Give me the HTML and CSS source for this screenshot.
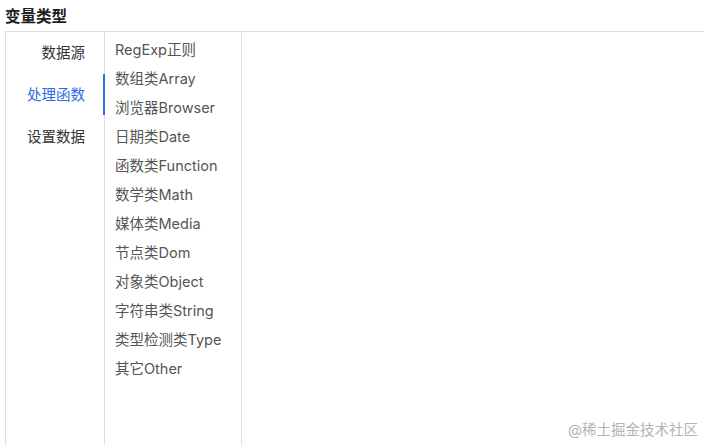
FILE: index.html
```html
<!DOCTYPE html>
<html lang="zh-CN">

<head>
    <meta charset="UTF-8">
    <title>变量类型</title>
    <link rel="stylesheet" href="styles.css">
</head>

<body>
    <h2 class="title">变量类型</h2>
    <div class="panel">
        <div class="tabs">
            <div class="tab">数据源</div>
            <div class="tab active">处理函数</div>
            <div class="tab">设置数据</div>
        </div>
        <ul class="types">
            <li>RegExp正则</li>
            <li>数组类Array</li>
            <li>浏览器Browser</li>
            <li>日期类Date</li>
            <li>函数类Function</li>
            <li>数学类Math</li>
            <li>媒体类Media</li>
            <li>节点类Dom</li>
            <li>对象类Object</li>
            <li>字符串类String</li>
            <li>类型检测类Type</li>
            <li>其它Other</li>
        </ul>
        <div class="content"></div>
    </div>
    <div class="watermark">@稀土掘金技术社区</div>
</body>

</html>
```

FILE: styles.css
```css
body {
    font-family: Inter, "Noto Sans CJK SC", sans-serif;
    margin: 0;
    padding: 0;
    height: 445px;
    overflow: hidden;
    background-color: #fff;
    display: flex;
    flex-direction: column;
    position: relative;
}

.title {
    font-size: 15.5px;
    font-weight: bold;
    color: #1f1f1f;
    margin: 0;
    padding: 6px 0 0 5px;
    height: 25px;
    line-height: 22px;
}

.panel {
    flex: 1;
    display: flex;
    margin-left: 5px;
    margin-right: -20px;
    border: 1px solid #dedede;
    border-bottom: none;
}

.tabs {
    width: 98px;
    border-right: 1px solid #dedede;
}

.tab {
    height: 42px;
    line-height: 42px;
    text-align: right;
    padding-right: 19px;
    font-size: 14.5px;
    color: #333;
    position: relative;
}

.tab.active {
    color: #2f6be0;
}

.tab.active::after {
    content: "";
    position: absolute;
    right: -1px;
    top: 0;
    width: 2px;
    height: 41px;
    background-color: #2f6be0;
}

.types {
    list-style: none;
    margin: 0;
    padding: 3px 0 0 10px;
    width: 126px;
    border-right: 1px solid #dedede;
}

.types li {
    height: 29px;
    line-height: 29px;
    font-size: 14.5px;
    color: #555;
    white-space: nowrap;
}

.content {
    flex: 1;
}

.watermark {
    position: absolute;
    right: 6px;
    bottom: 6px;
    font-size: 14.5px;
    color: #b3b3b3;
}
```
